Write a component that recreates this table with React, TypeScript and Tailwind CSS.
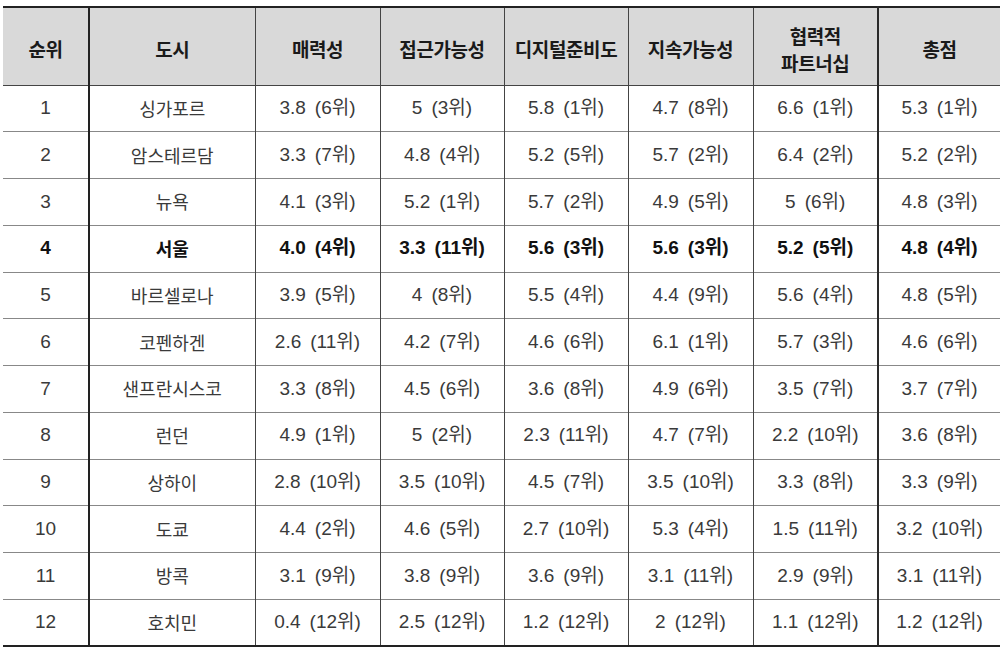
import React from "react";

type Cell = [string, number];
type Row = [number, string, Cell, Cell, Cell, Cell, Cell, Cell];

const rows: Row[] = [
  [1, "싱가포르", ["3.8", 6], ["5", 3], ["5.8", 1], ["4.7", 8], ["6.6", 1], ["5.3", 1]],
  [2, "암스테르담", ["3.3", 7], ["4.8", 4], ["5.2", 5], ["5.7", 2], ["6.4", 2], ["5.2", 2]],
  [3, "뉴욕", ["4.1", 3], ["5.2", 1], ["5.7", 2], ["4.9", 5], ["5", 6], ["4.8", 3]],
  [4, "서울", ["4.0", 4], ["3.3", 11], ["5.6", 3], ["5.6", 3], ["5.2", 5], ["4.8", 4]],
  [5, "바르셀로나", ["3.9", 5], ["4", 8], ["5.5", 4], ["4.4", 9], ["5.6", 4], ["4.8", 5]],
  [6, "코펜하겐", ["2.6", 11], ["4.2", 7], ["4.6", 6], ["6.1", 1], ["5.7", 3], ["4.6", 6]],
  [7, "샌프란시스코", ["3.3", 8], ["4.5", 6], ["3.6", 8], ["4.9", 6], ["3.5", 7], ["3.7", 7]],
  [8, "런던", ["4.9", 1], ["5", 2], ["2.3", 11], ["4.7", 7], ["2.2", 10], ["3.6", 8]],
  [9, "상하이", ["2.8", 10], ["3.5", 10], ["4.5", 7], ["3.5", 10], ["3.3", 8], ["3.3", 9]],
  [10, "도쿄", ["4.4", 2], ["4.6", 5], ["2.7", 10], ["5.3", 4], ["1.5", 11], ["3.2", 10]],
  [11, "방콕", ["3.1", 9], ["3.8", 9], ["3.6", 9], ["3.1", 11], ["2.9", 9], ["3.1", 11]],
  [12, "호치민", ["0.4", 12], ["2.5", 12], ["1.2", 12], ["2", 12], ["1.1", 12], ["1.2", 12]],
];

const colBorder = [
  "border-r-2 border-r-[#222]",
  "border-r border-r-[#444]",
  "border-r border-r-[#444]",
  "border-r border-r-[#444]",
  "border-r border-r-[#444]",
  "border-r border-r-[#444]",
  "border-r-2 border-r-[#2a2a2a]",
  "",
];

export default function App() {
  return (
    <div className="w-[1000px] h-[653px] bg-white pt-[6px] pl-[3px] overflow-hidden font-['Liberation_Sans','Noto_Sans_CJK_KR',sans-serif]">
      <table className="table-fixed border-collapse w-[997px]">
        <colgroup>
          <col className="w-[86px]" />
          <col className="w-[166px]" />
          <col className="w-[125px]" />
          <col className="w-[124px]" />
          <col className="w-[124px]" />
          <col className="w-[125px]" />
          <col className="w-[125px]" />
          <col className="w-[122px]" />
        </colgroup>
        <thead>
          <tr className="h-[78px] bg-[#d9d9d9] border-t-2 border-t-[#222] border-b border-b-[#444]">
            {["순위", "도시", "매력성", "접근가능성", "디지털준비도", "지속가능성", "협력적\n파트너십", "총점"].map(
              (h, i) => (
                <th
                  key={i}
                  className={`${colBorder[i]} p-0 pt-[5px] text-center align-middle font-bold text-[19px] leading-[27px] text-[#1a1a1a] whitespace-pre-line tracking-[-0.4px] font-['Noto_Sans_CJK_KR',sans-serif]`}
                >
                  {h}
                </th>
              )
            )}
          </tr>
        </thead>
        <tbody>
          {rows.map((r, ri) => {
            const bold = r[0] === 4;
            const last = ri === rows.length - 1;
            return (
              <tr
                key={ri}
                className={`h-[46.75px] ${last ? "border-b-2 border-b-[#222]" : "border-b border-b-[#888]"} ${
                  bold ? "font-bold text-[#111]" : "font-normal text-[#3a3a3a]"
                }`}
              >
                <td className={`${colBorder[0]} p-0 text-center align-middle text-[19px]`}>{r[0]}</td>
                <td className={`${colBorder[1]} p-0 text-center align-middle text-[18px] font-['Noto_Sans_CJK_KR',sans-serif]`}>
                  {r[1]}
                </td>
                {(r.slice(2) as Cell[]).map((c, ci) => (
                  <td key={ci} className={`${colBorder[ci + 2]} p-0 text-center align-middle text-[19px] whitespace-nowrap`}>
                    <span>{c[0]}</span>
                    <span className="ml-[9px]">({c[1]}위)</span>
                  </td>
                ))}
              </tr>
            );
          })}
        </tbody>
      </table>
    </div>
  );
}
